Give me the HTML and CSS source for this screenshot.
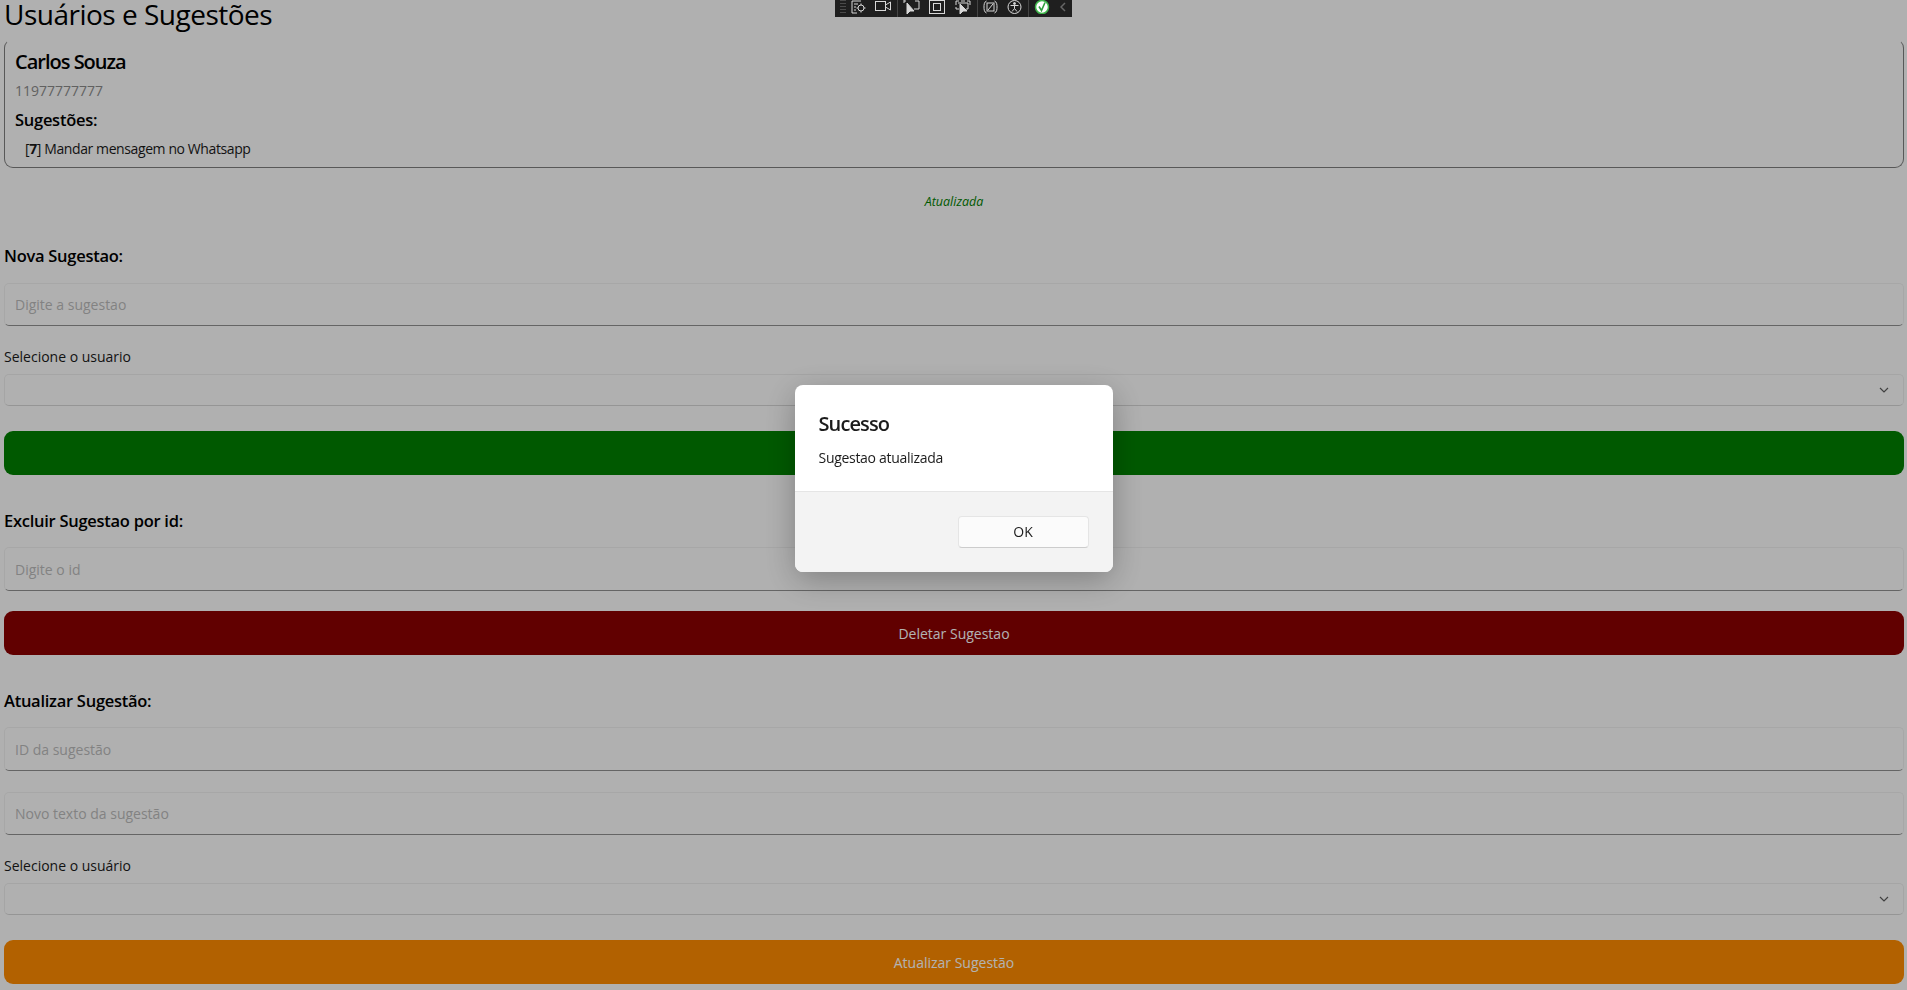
FILE: index.html
```html
<!DOCTYPE html>
<html lang="pt-BR">
<head>
<meta charset="utf-8">
<title>Usuários e Sugestões</title>
<link rel="stylesheet" href="styles.css">
</head>
<body>
<main class="page">
  <h1 class="title">Usuários e Sugestões</h1>
  <section class="card">
    <h2 class="name">Carlos Souza</h2>
    <p class="phone">11977777777</p>
    <h3 class="sub">Sugestões:</h3>
    <p class="item">[<b>7</b>] Mandar mensagem no Whatsapp</p>
  </section>
  <p class="status">Atualizada</p>

  <h3 class="heading first">Nova Sugestao:</h3>
  <div class="entry"><span class="hint">Digite a sugestao</span></div>
  <p class="label">Selecione o usuario</p>
  <div class="picker"><svg class="chev" viewBox="0 0 10 6"><path d="M1 1l4 4 4-4"/></svg></div>
  <div class="btn green"></div>

  <h3 class="heading">Excluir Sugestao por id:</h3>
  <div class="entry tall"><span class="hint">Digite o id</span></div>
  <div class="btn red tight">Deletar Sugestao</div>

  <h3 class="heading">Atualizar Sugestão:</h3>
  <div class="entry tall"><span class="hint">ID da sugestão</span></div>
  <div class="entry next"><span class="hint">Novo texto da sugestão</span></div>
  <p class="label">Selecione o usuário</p>
  <div class="picker"><svg class="chev" viewBox="0 0 10 6"><path d="M1 1l4 4 4-4"/></svg></div>
  <div class="btn orange">Atualizar Sugestão</div>
</main>

<div class="overlay">
  <div class="dialog">
    <div class="dialog-body">
      <h2 class="dialog-title">Sucesso</h2>
      <p class="dialog-text">Sugestao atualizada</p>
    </div>
    <div class="dialog-foot"><div class="ok">OK</div></div>
  </div>
</div>

<nav class="toolbar">
  <span class="grip"></span>
  <svg class="tool w15 g5" viewBox="0 0 15 14"><path d="M10 1H1v12h5M3 4h4M3 7h2M3 10h2"/><circle cx="10" cy="8" r="3"/><path d="M10 3.500v1.500M10 11v1.500M5.500 8H7M13 8h1.500"/></svg>
  <svg class="tool w16 g9" viewBox="0 0 16 14"><rect x="0.5" y="1.5" width="10" height="9"/><path d="M10.500 5l5-3v8l-5-3"/></svg>
  <i class="sep g6"></i>
  <svg class="tool w17 g5" viewBox="0 0 17 14"><path d="M1 0v3M1 1h2M12 1h4v8h-5"/><path class="solid" d="M4 3v11l3-3h4z"/></svg>
  <svg class="tool w16 g9" viewBox="0 0 16 14"><rect x="0.5" y="0.5" width="15" height="13"/><rect x="4.5" y="3.5" width="7" height="7"/></svg>
  <svg class="tool w16 g10" viewBox="0 0 16 14"><path d="M1 5V1h3M6 1h4M12 1h3v4M1 7v2h3M3 3h10v6h-2"/><path class="solid" d="M5 4v10l3-3h4z"/></svg>
  <i class="sep g6"></i>
  <svg class="tool w15 g5" viewBox="0 0 15 14"><path d="M3.500 1C1 2 1 5 1 7s0 5 2.500 6M11.500 1C14 2 14 5 14 7s0 5-2.500 6"/><rect x="4" y="3" width="7" height="8"/><path d="M5 10l5-6"/></svg>
  <svg class="tool w15 g9" viewBox="0 0 15 14"><circle cx="7.500" cy="7" r="6.500"/><circle class="solid" cx="7.500" cy="3.500" r="1"/><path d="M3.500 5.500h8M7.500 5.500v3l-2.500 3M7.500 8.500l2.500 3"/></svg>
  <i class="sep g6"></i>
  <svg class="tool w16 g5 ok-icon" viewBox="0 0 16 14"><circle class="disc" cx="8" cy="7" r="6.500"/><path class="tick" d="M5 6.500l2.500 4 3.500-8"/></svg>
  <svg class="tool back g10" viewBox="0 0 6 10"><path d="M5 1L1 5l4 4"/></svg>
</nav>
</body>
</html>
```
FILE: styles.css
```css
* { box-sizing: border-box; }
html, body { margin: 0; height: 100%; overflow: hidden; }
body {
  background: #fcfcfc;
  color: #000;
  font-family: "Open Sans", "Noto Sans", "Liberation Sans", sans-serif;
}
.page { padding: 0 3px 0 4px; display: flex; flex-direction: column; }
h1, h2, h3, p { margin: 0; }
.title { font-size: 28px; line-height: 30px; height: 40px; margin-top: -1px; font-weight: 400; letter-spacing: -0.5px; white-space: nowrap; }
.card {
  height: 129px;
  border: 1px solid #7f7f7f;
  border-top-color: transparent;
  border-radius: 9px;
  padding: 9px 10px 0;
}
.name { font-size: 20px; line-height: 26px; font-weight: 600; letter-spacing: -1px; }
.phone { font-size: 14px; line-height: 20px; margin-top: 6px; color: #8c8c8c; }
.sub { font-size: 16.5px; line-height: 22px; font-weight: 600; letter-spacing: -0.27px; margin-top: 8px; }
.item { font-size: 14px; line-height: 20px; margin: 8px 0 0 10px; letter-spacing: -0.4px; color: #1a1a1a; }
.item b { font-weight: 700; }
.status { font-size: 12.5px; line-height: 16px; margin-top: 26px; text-align: center; font-style: italic; color: #008000; }
.heading { font-size: 16.5px; line-height: 22px; font-weight: 600; letter-spacing: -0.27px; margin-top: 35px; height: 37px; }
.heading.first { height: 38px; }
.entry {
  height: 43px;
  border: 1px solid #f0f0f0;
  border-bottom: 1px solid #919191;
  border-radius: 5px;
  background: #fdfdfd;
  padding: 0 10px;
  display: flex;
  align-items: center;
}
.entry.tall { height: 44px; }
.entry.next { margin-top: 21px; }
.hint { font-size: 14px; color: #bbb; }
.label { font-size: 14px; line-height: 20px; margin-top: 21px; height: 27px; color: #1a1a1a; }
.picker {
  height: 32px;
  border: 1px solid #ededed;
  border-bottom-color: #d6d6d6;
  border-radius: 5px;
  background: #fdfdfd;
  display: flex;
  align-items: center;
  justify-content: flex-end;
  padding-right: 14px;
}
.chev { width: 10px; height: 6px; fill: none; stroke: #5c5c5c; stroke-width: 1.2; }
.btn {
  height: 44px;
  margin-top: 25px;
  border-radius: 9px;
  color: #fff;
  font-size: 14px;
  display: flex;
  align-items: center;
  justify-content: center;
}
.btn.tight { margin-top: 20px; }
.green { background: #008000; }
.red { background: #8b0000; }
.orange { background: #ff8c00; }
.overlay {
  position: fixed;
  inset: 0;
  background: rgba(0, 0, 0, 0.3);
  display: flex;
  justify-content: center;
  padding-top: 385px;
}
.dialog {
  width: 318px;
  height: 187px;
  border-radius: 8px;
  overflow: hidden;
  background: #fff;
  box-shadow: 0 8px 32px rgba(0, 0, 0, 0.28);
  display: flex;
  flex-direction: column;
  align-self: flex-start;
}
.dialog-body { height: 107px; padding: 25px 24px 0; border-bottom: 1px solid #e5e5e5; }
.dialog-title { font-size: 20px; line-height: 28px; font-weight: 600; letter-spacing: -0.9px; color: #1b1b1b; }
.dialog-text { font-size: 14px; line-height: 20px; margin-top: 10px; letter-spacing: -0.3px; color: #1b1b1b; }
.dialog-foot { flex: 1; background: #f3f3f3; padding: 24px 24px 0; display: flex; justify-content: flex-end; align-items: flex-start; }
.ok {
  width: 131px;
  height: 32px;
  border: 1px solid #e5e5e5;
  border-bottom-color: #ccc;
  border-radius: 4px;
  background: #fbfbfb;
  color: #1b1b1b;
  font-size: 14px;
  padding-bottom: 2px;
  display: flex;
  align-items: center;
  justify-content: center;
}
.toolbar {
  position: fixed;
  top: 0;
  left: 835px;
  width: 237px;
  height: 17px;
  background: #1f1f1f;
  display: flex;
  align-items: flex-start;
  padding-left: 5px;
}
.grip { width: 6px; height: 15px; background: repeating-linear-gradient(#4a4a4a 0 1px, transparent 1px 3px); }
.tool { height: 14px; flex: none; fill: none; stroke: #d8d8d8; stroke-width: 1; }
.tool .solid { fill: #d8d8d8; }
.w15 { width: 15px; }
.w16 { width: 16px; }
.w17 { width: 17px; }
.g5 { margin-left: 5px; }
.g6 { margin-left: 6px; }
.g9 { margin-left: 9px; }
.g10 { margin-left: 10px; }
.sep { width: 1px; height: 17px; background: #444; flex: none; }
.ok-icon .disc { fill: #fff; stroke: #3eb54a; stroke-width: 1.5; }
.ok-icon .tick { stroke: #2f9e3d; stroke-width: 1.6; }
.tool.back { width: 6px; height: 10px; margin-top: 2px; stroke: #666; stroke-width: 1.5; }
```
